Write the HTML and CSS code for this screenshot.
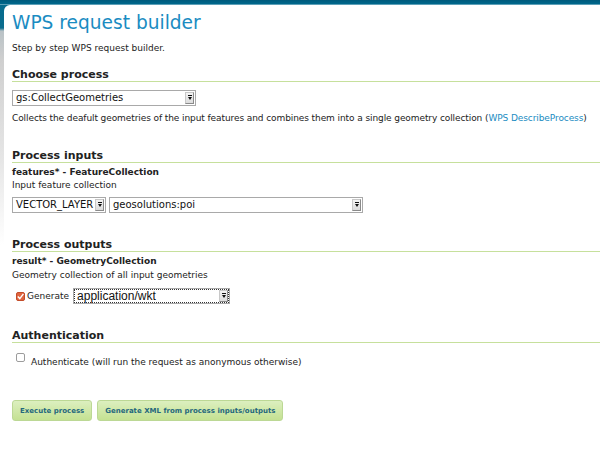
FILE: index.html
```html
<!DOCTYPE html>
<html>
<head>
<meta charset="utf-8">
<link rel="stylesheet" href="styles.css">
</head>
<body>
<div class="page">
  <div class="panel">
    <h1 class="title">WPS request builder</h1>
    <p class="subtitle">Step by step WPS request builder.</p>

    <h2 class="section">Choose process</h2>
    <div class="row">
      <div class="select w-process"><span class="sel-text">gs:CollectGeometries</span><span class="sel-btn"><i class="arrow"></i></span></div>
    </div>
    <p class="desc">Collects the deafult geometries of the input features and combines them into a single geometry collection (<a class="link" href="#">WPS DescribeProcess</a>)</p>

    <h2 class="section">Process inputs</h2>
    <p class="label">features* - FeatureCollection</p>
    <p class="text">Input feature collection</p>
    <div class="row pair">
      <div class="select w-type"><span class="sel-text">VECTOR_LAYER</span><span class="sel-btn"><i class="arrow"></i></span></div>
      <div class="select w-layer"><span class="sel-text">geosolutions:poi</span><span class="sel-btn"><i class="arrow"></i></span></div>
    </div>

    <h2 class="section">Process outputs</h2>
    <p class="label">result* - GeometryCollection</p>
    <p class="text text-gap">Geometry collection of all input geometries</p>
    <div class="row gen-row">
      <span class="check"><svg width="9" height="9" viewBox="0 0 9 9"><rect x="0.5" y="0.5" width="8" height="8" rx="1.5" fill="#e0653f" stroke="#c34c2a"/><path d="M1.8 4.6 L3.8 6.6 L7.4 1.9" fill="none" stroke="#fff" stroke-width="1.4"/></svg></span>
      <span class="gen-label">Generate</span>
      <div class="select w-format focus"><span class="sel-text big">application/wkt</span><span class="sel-btn"><i class="arrow"></i></span></div>
    </div>

    <h2 class="section">Authentication</h2>
    <div class="row auth-row">
      <span class="check"><svg width="9" height="9" viewBox="0 0 9 9"><rect x="0.5" y="0.5" width="8" height="8" rx="1.5" fill="#fff" stroke="#9c9c9c"/></svg></span>
      <span class="auth-label">Authenticate (will run the request as anonymous otherwise)</span>
    </div>

    <div class="row buttons">
      <button class="btn">Execute process</button>
      <button class="btn">Generate XML from process inputs/outputs</button>
    </div>
  </div>
</div>
</body>
</html>
```

FILE: styles.css
```css
html, body {
  margin: 0;
  padding: 0;
  background: #fff;
}
.page {
  width: 600px;
  height: 466px;
  box-sizing: border-box;
  padding: 5px 0 0 4px;
  background:
    linear-gradient(to bottom, #005a7c 0, #00688c 4px, #b9d6e2 5px, rgba(255,255,255,0) 5px),
    linear-gradient(to bottom, #05698c 0, #0b6d8e 28px, #b9c2c6 31px, #cfcfcf 60px, #e6e6e6 160px, #fff 245px);
  font-family: "DejaVu Sans", Verdana, sans-serif;
  color: #222;
  overflow: hidden;
}
.panel {
  background: #fff;
  height: 100%;
  border-top-left-radius: 6px;
  padding-left: 8px;
  box-sizing: border-box;
}
.title {
  margin: 0;
  padding-top: 6px;
  font-size: 18.6px;
  font-weight: normal;
  color: #1a8cc2;
  line-height: 24px;
}
.subtitle {
  margin: 8px 0 0;
  font-size: 9px;
  line-height: 11px;
  color: #222;
}
.section {
  margin: 25px 0 0;
  font-size: 11px;
  line-height: 13px;
  font-weight: bold;
  color: #222;
  padding-bottom: 0;
  border-bottom: 1px solid #c6e09c;
}
.subtitle + .section { margin-top: 14px; }
.row {
  display: flex;
  align-items: center;
}
.select {
  box-sizing: border-box;
  height: 16px;
  border: 1px solid #a9a9a9;
  background: #fff;
  display: flex;
  align-items: center;
  justify-content: space-between;
  margin-top: 8px;
}
.pair { gap: 3px; margin-top: 6px; }
.pair .select { margin-top: 0; }
.sel-text {
  font-size: 10px;
  padding-left: 3px;
  color: #111;
  line-height: 14px;
  white-space: nowrap;
}
.sel-text.big {
  font-family: "Liberation Sans", Arial, sans-serif;
  font-size: 12px;
  padding-left: 3px;
}
.sel-btn {
  width: 9px;
  height: 12px;
  margin-right: 1px;
  background: linear-gradient(to bottom, #f4f4f4, #dcdcdc);
  border: 1px solid #c8c8c8;
  border-right-color: #8a8a8a;
  border-bottom-color: #8a8a8a;
  position: relative;
  box-sizing: border-box;
  flex: none;
}
.arrow {
  position: absolute;
  left: 2px;
  top: 4px;
  width: 0;
  height: 0;
  border-left: 2px solid transparent;
  border-right: 2px solid transparent;
  border-top: 3px solid #111;
}
.arrow::before {
  content: "";
  position: absolute;
  left: -2px;
  top: -5px;
  width: 4px;
  height: 1px;
  background: #111;
}
.w-process { width: 184px; }
.w-type { width: 94px; }
.w-layer { width: 254px; }
.w-format { width: 157px; margin-top: 0; }
.focus {
  outline: 1px dotted #333;
  outline-offset: -2px;
}
.desc {
  margin: 7px 0 0;
  font-size: 9px;
  line-height: 11px;
  white-space: nowrap;
  letter-spacing: -0.09px;
}
.link {
  color: #1a8cc2;
  text-decoration: none;
}
.label {
  margin: 4px 0 0;
  font-size: 9px;
  line-height: 11px;
  font-weight: bold;
}
.text {
  margin: 2px 0 0;
  font-size: 9px;
  line-height: 11px;
}
.text-gap { margin-top: 3px; }
.gen-row {
  margin-top: 7px;
  height: 16px;
}
.check {
  display: inline-flex;
  width: 9px;
  height: 9px;
  margin-left: 4px;
}
.gen-label {
  font-size: 9px;
  margin-left: 2px;
  margin-right: 4px;
}
.auth-row {
  margin-top: 10px;
  align-items: flex-start;
}
.auth-label {
  font-size: 9px;
  line-height: 11px;
  margin-left: 6px;
  margin-top: 4px;
}
.buttons {
  margin-top: 32px;
  gap: 5px;
}
.btn {
  height: 21px;
  box-sizing: border-box;
  padding: 0 7px;
  border: 1px solid #bcd895;
  border-radius: 3px;
  background: linear-gradient(to bottom, #dcefbf, #c4e192);
  color: #24677c;
  font-family: "DejaVu Sans", Verdana, sans-serif;
  font-weight: bold;
  font-size: 7px;
  cursor: pointer;
}
```
